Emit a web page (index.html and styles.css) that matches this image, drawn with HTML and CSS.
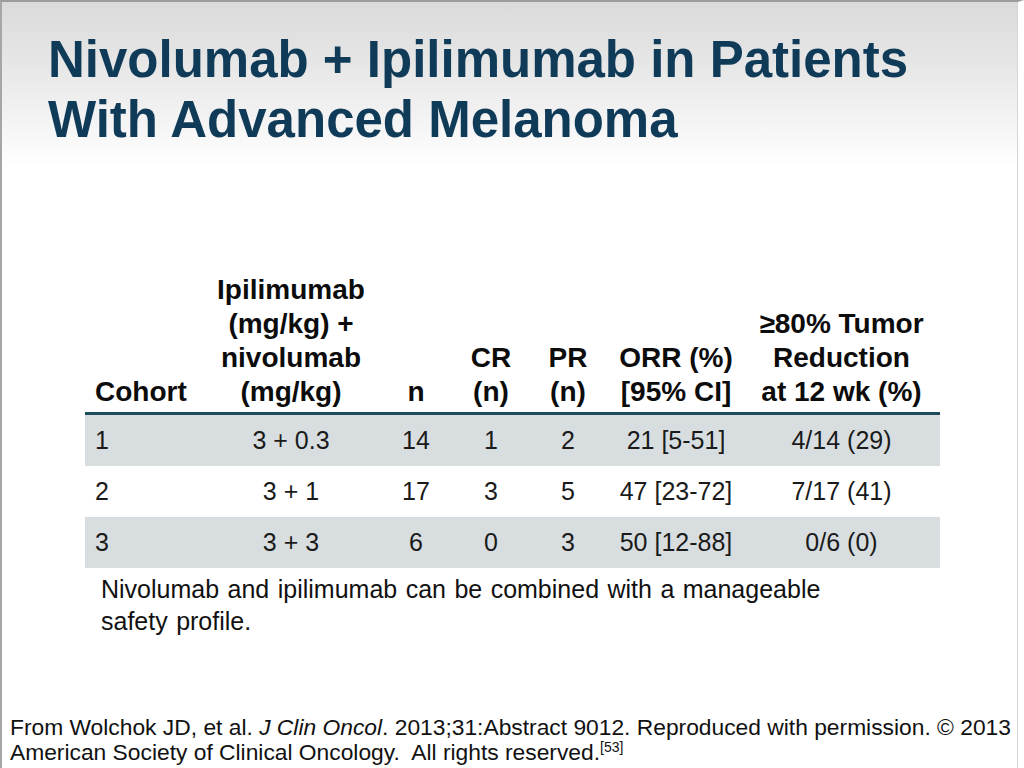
FILE: index.html
```html
<!DOCTYPE html>
<html lang="en">
<head>
<meta charset="utf-8">
<title>Nivolumab + Ipilimumab in Patients With Advanced Melanoma</title>
<link rel="stylesheet" href="styles.css">
</head>
<body>
<div class="slide">
  <h1 class="title">Nivolumab + Ipilimumab in Patients<br>With Advanced Melanoma</h1>
  <table class="data">
    <colgroup>
      <col class="c1"><col class="c2"><col class="c3"><col class="c4"><col class="c5"><col class="c6"><col class="c7">
    </colgroup>
    <thead>
      <tr>
        <th class="left">Cohort</th>
        <th>Ipilimumab<br>(mg/kg) +<br>nivolumab<br>(mg/kg)</th>
        <th>n</th>
        <th>CR<br>(n)</th>
        <th>PR<br>(n)</th>
        <th>ORR (%)<br>[95% CI]</th>
        <th>≥80% Tumor<br>Reduction<br>at 12 wk (%)</th>
      </tr>
    </thead>
    <tbody>
      <tr class="shade">
        <td class="left">1</td><td>3 + 0.3</td><td>14</td><td>1</td><td>2</td><td>21 [5-51]</td><td>4/14 (29)</td>
      </tr>
      <tr>
        <td class="left">2</td><td>3 + 1</td><td>17</td><td>3</td><td>5</td><td>47 [23-72]</td><td>7/17 (41)</td>
      </tr>
      <tr class="shade">
        <td class="left">3</td><td>3 + 3</td><td>6</td><td>0</td><td>3</td><td>50 [12-88]</td><td>0/6 (0)</td>
      </tr>
    </tbody>
  </table>
  <p class="note">Nivolumab and ipilimumab can be combined with a manageable<br>safety profile.</p>
  <p class="source">From Wolchok JD, et al. <i>J Clin Oncol</i>. 2013;31:Abstract 9012. Reproduced with permission. © 2013<br>American Society of Clinical Oncology.&nbsp; All rights reserved.<sup>[53]</sup></p>
</div>
</body>
</html>
```

FILE: styles.css
```css
html, body {
  margin: 0;
  padding: 0;
  background: #ffffff;
}

.slide {
  box-sizing: border-box;
  width: 1024px;
  height: 768px;
  display: flex;
  flex-direction: column;
  border-top: 2px solid #9c9c9c;
  border-left: 2px solid #a6a6a6;
  border-right: 6px solid #ffffff;
  box-shadow: inset -1px 0 0 #d6d6d6;
  background: linear-gradient(to bottom, #dadada 0px, #e6e6e6 60px, #f4f4f4 120px, #ffffff 165px, #ffffff 100%);
  font-family: "Liberation Sans", Arial, sans-serif;
  color: #111111;
}

.title {
  margin: 0;
  padding: 28px 0 0 46px;
  font-size: 51px;
  line-height: 60px;
  font-weight: bold;
  color: #0f3b59;
}

.data {
  margin: 123px 0 0 83px;
  border-collapse: collapse;
  table-layout: fixed;
  width: 855px;
}

.c1 { width: 120px; }
.c2 { width: 172px; }
.c3 { width: 78px; }
.c4 { width: 72px; }
.c5 { width: 82px; }
.c6 { width: 134px; }
.c7 { width: 197px; }

.data th {
  font-size: 28px;
  line-height: 34px;
  font-weight: bold;
  text-align: center;
  vertical-align: bottom;
  padding: 0 0 3px 0;
  border-bottom: 3px solid #1e4b5e;
  color: #0c0c0c;
  white-space: nowrap;
}

.data td {
  font-size: 25px;
  height: 51px;
  padding: 0;
  text-align: center;
  vertical-align: middle;
  color: #1a1a1a;
  white-space: nowrap;
}

.data .left {
  text-align: left;
  padding-left: 10px;
}

.data tr.shade td {
  background: #d8dee0;
}

.note {
  margin: 5px 0 0 99px;
  font-size: 25px;
  line-height: 32px;
  word-spacing: 1.5px;
  color: #111111;
}

.source {
  margin: auto 0 3px 8px;
  font-size: 22.8px;
  line-height: 25px;
  white-space: nowrap;
  color: #111111;
}

.source sup {
  font-size: 14px;
  line-height: 0;
  vertical-align: 8px;
}
```
